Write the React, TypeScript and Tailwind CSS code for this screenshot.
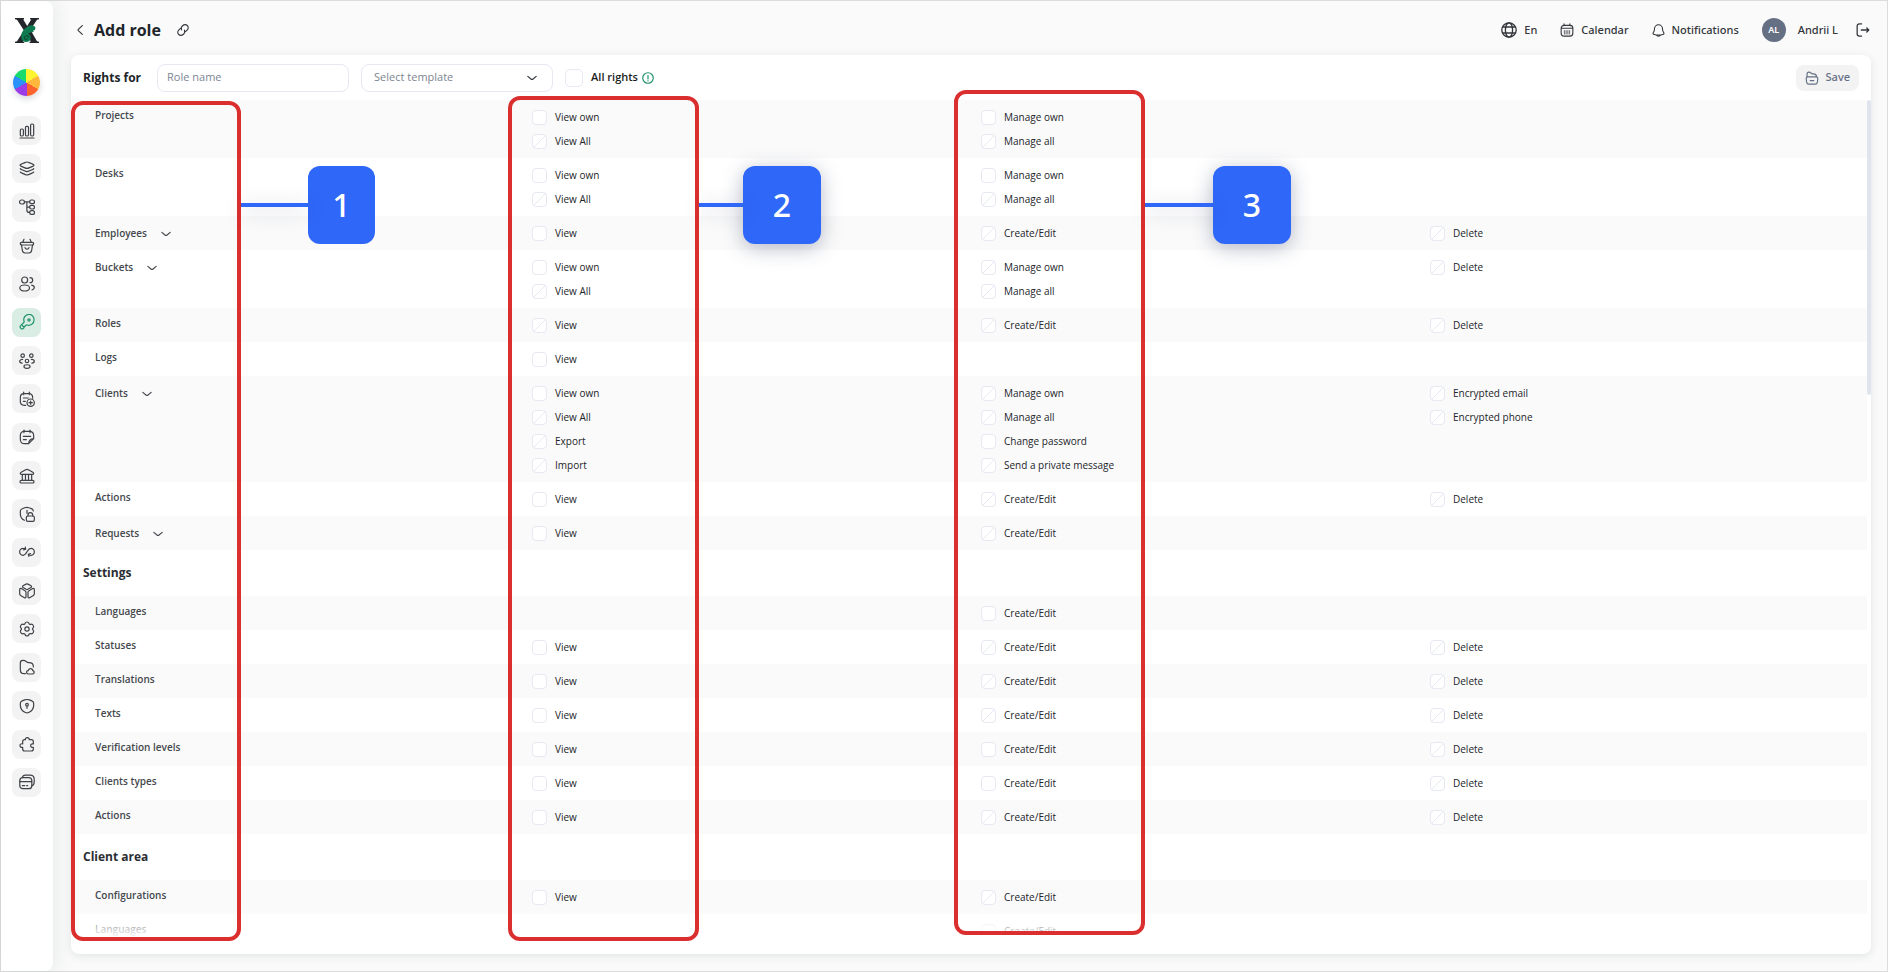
import type { ReactNode } from "react";

type Right = { label: string; locked?: boolean };

type Row = {
  name: string;
  section?: boolean;
  expandable?: boolean;
  view?: Right[];
  manage?: Right[];
  extra?: Right[];
};

const open = (label: string): Right => ({ label });
const locked = (label: string): Right => ({ label, locked: true });

const VIEW = [open("View")];
const VIEW_BOTH = [open("View own"), locked("View All")];
const EDIT = [locked("Create/Edit")];
const DELETE = [locked("Delete")];

const ROWS: Row[] = [
  { name: "Projects", view: VIEW_BOTH, manage: [open("Manage own"), locked("Manage all")] },
  { name: "Desks", view: VIEW_BOTH, manage: [open("Manage own"), locked("Manage all")] },
  { name: "Employees", expandable: true, view: VIEW, manage: EDIT, extra: DELETE },
  { name: "Buckets", expandable: true, view: VIEW_BOTH, manage: [locked("Manage own"), locked("Manage all")], extra: DELETE },
  { name: "Roles", view: [locked("View")], manage: EDIT, extra: DELETE },
  { name: "Logs", view: VIEW },
  {
    name: "Clients",
    expandable: true,
    view: [...VIEW_BOTH, locked("Export"), locked("Import")],
    manage: [locked("Manage own"), locked("Manage all"), open("Change password"), locked("Send a private message")],
    extra: [locked("Encrypted email"), locked("Encrypted phone")],
  },
  { name: "Actions", view: VIEW, manage: EDIT, extra: DELETE },
  { name: "Requests", expandable: true, view: VIEW, manage: EDIT },
  { name: "Settings", section: true },
  { name: "Languages", manage: [open("Create/Edit")] },
  { name: "Statuses", view: VIEW, manage: EDIT, extra: DELETE },
  { name: "Translations", view: VIEW, manage: EDIT, extra: DELETE },
  { name: "Texts", view: VIEW, manage: EDIT, extra: DELETE },
  { name: "Verification levels", view: VIEW, manage: [open("Create/Edit")], extra: DELETE },
  { name: "Clients types", view: VIEW, manage: [open("Create/Edit")], extra: DELETE },
  { name: "Actions", view: VIEW, manage: EDIT, extra: DELETE },
  { name: "Client area", section: true },
  { name: "Configurations", view: VIEW, manage: EDIT },
  { name: "Languages", manage: [open("Create/Edit")] },
];

function Svg({ children, className = "h-4 w-4", width = 1.8 }: { children: ReactNode; className?: string; width?: number }) {
  return (
    <svg
      viewBox="0 0 24 24"
      fill="none"
      stroke="currentColor"
      strokeWidth={width}
      strokeLinecap="round"
      strokeLinejoin="round"
      className={`shrink-0 ${className}`}
      aria-hidden
    >
      {children}
    </svg>
  );
}

const NAV: { label: string; icon: ReactNode }[] = [
  {
    label: "Statistics",
    icon: (
      <>
        <path d="M1.5 22.5h21" />
        <rect x="2" y="9" width="4.6" height="10.5" rx="1.8" />
        <rect x="9.7" y="5" width="4.6" height="14.5" rx="1.8" />
        <rect x="17.4" y="1.5" width="4.6" height="18" rx="1.8" />
      </>
    ),
  },
  {
    label: "Desks",
    icon: (
      <>
        <path d="M4.5 8.4C2.5 7.6 1.5 7.1 1.5 6.3s1-1.2 3-2.1L8 2.8C9.9 2 10.9 1.5 12 1.5s2.1.5 4 1.3l3.5 1.4c2 .9 3 1.3 3 2.1s-1 1.3-3 2.1L16 9.9c-1.9.8-2.9 1.2-4 1.2s-2.1-.4-4-1.2z" />
        <path d="M2 11.500c.3.800 1.100 1.100 2.500 1.700L8 14.700c1.900.8 2.900 1.200 4 1.200s2.100-.4 4-1.200l3.500-1.500c1.400-.6 2.200-.9 2.500-1.700" />
        <path d="M2 16.500c.3.800 1.100 1.100 2.500 1.700L8 19.700c1.900.8 2.900 1.300 4 1.300s2.100-.5 4-1.300l3.500-1.500c1.400-.6 2.200-.9 2.500-1.700" />
      </>
    ),
  },
  {
    label: "Structure",
    icon: (
      <>
        <rect x=".8" y="1.500" width="7.400" height="6" rx="3" />
        <rect x="16" y="1.500" width="7.200" height="5.500" rx="2.500" />
        <rect x="16" y="9.500" width="7.200" height="5.500" rx="2.500" />
        <rect x="16" y="17.500" width="7.200" height="5.500" rx="2.500" />
        <path d="M8.200 4.300H16M11.800 4.300v12.500c0 2.300 1 3.400 4.200 3.400M11.800 12.200H16" />
      </>
    ),
  },
  {
    label: "Buckets",
    icon: (
      <>
        <path d="M2 8.500C2 7.200 2.800 6.500 4 6.500h16c1.200 0 2 .7 2 2s-.8 2-2 2H4c-1.200 0-2-.7-2-2zM7.500 2 5.500 6.300M16.500 2l2 4.300" />
        <path d="m3.800 10.700 1.200 8c.5 2.600 1.500 3.800 4 3.800h6c2.500 0 3.500-1.200 4-3.800l1.200-8M9 14.500c.4 1.500 1.500 2.400 3 2.400s2.600-.9 3-2.400" />
      </>
    ),
  },
  {
    label: "Employees",
    icon: (
      <>
        <circle cx="8.500" cy="6" r="4.500" />
        <ellipse cx="8.500" cy="18" rx="7.300" ry="4.500" />
        <path d="M16.500 2.500c2.300 0 4 1.600 4 3.700s-1.700 3.800-4 3.800M19 13.800c2.300.5 4 1.800 4 3.600s-1.400 3-3.500 3.600" />
      </>
    ),
  },
  {
    label: "Roles",
    icon: (
      <>
        <path d="M22.500 9.200a7.700 7.700 0 0 1-10.300 7.300c-.7-.2-1.300-.1-1.800.4l-1 1.100c-.4.4-1.200.5-1.800.5.2.9.2 1.700-.5 2.500l-.7.7c-.9 1-2.300 1-3.200.1l-1-1c-.9-.9-.9-2.200 0-3.100l5-5c.5-.5.6-1.100.4-1.800A7.700 7.700 0 1 1 22.500 9.200z" />
        <path d="m4.800 17.200 2.300 2" />
        <circle cx="15" cy="9" r="1.700" />
      </>
    ),
  },
  {
    label: "Teams",
    icon: (
      <>
        <circle cx="5.500" cy="4" r="2.600" />
        <circle cx="18.500" cy="4" r="2.600" />
        <circle cx="12" cy="12" r="2.600" />
        <ellipse cx="12" cy="20.300" rx="4.600" ry="2.700" />
        <path d="M5.500 9.500c-2.600 0-4.500 1.300-4.500 3s1.500 2.500 3.700 2.700M18.500 9.500c2.600 0 4.500 1.300 4.500 3s-1.500 2.500-3.700 2.700" />
      </>
    ),
  },
  {
    label: "Add event",
    icon: (
      <>
        <path d="M10 21.500H8c-4.300 0-6-1.700-6-6V9.800c0-4.300 1.700-6 6-6h6.500c4.300 0 6 1.700 6 6v1M7 1.500v4M15.500 1.500v4M6.500 10.500H14M6.500 15.500h3" />
        <circle cx="17.500" cy="17.500" r="5.500" />
        <path d="M17.500 15v5M15 17.500h5" />
      </>
    ),
  },
  {
    label: "Notes",
    icon: (
      <path d="M14.500 22H8.500c-4.500 0-6.500-2-6.500-6.500V10c0-4.500 2-6.500 6.500-6.500h7C20 3.500 22 5.500 22 10v4.500zM14.500 22c.3-5.200 2-7.200 7.500-7.500M7.500 1.500v4M16.500 1.500v4M6.500 11h11M6.500 16H11" />
    ),
  },
  {
    label: "Banks",
    icon: (
      <path d="M2 8.300c0-1 .4-1.500 1.300-2l6-3.400c1.800-1 3.600-1 5.400 0l6 3.400c.9.500 1.300 1 1.300 2 0 .7-.5 1.200-1.200 1.200H3.200C2.500 9.500 2 9 2 8.300zM5 9.500v9M9.700 9.500v9M14.300 9.500v9M19 9.500v9M3.500 18.500h17c1 0 2 .8 2 2s-1 2-2 2h-17c-1 0-2-.8-2-2s1-2 2-2z" />
    ),
  },
  {
    label: "Privacy",
    icon: (
      <>
        <path d="M8 21.500C4.500 19.800 2 16.800 2 12V7.500c0-2 .8-2.500 3-3.300l3.500-1.500c2.300-.9 4.300-.9 6.500 0L18.500 4c2 .8 2.800 1.500 3 3.500M12 6.500v4.500" />
        <rect x="11" y="15" width="12" height="8" rx="2" />
        <path d="M13.500 15v-1.500a3.500 3.500 0 0 1 7 0V15" />
      </>
    ),
  },
  {
    label: "Sync",
    icon: (
      <path d="M10 7.800C8.800 6.900 7.600 6.500 6.200 6.500A5 5 0 0 0 1 11.800 5 5 0 0 0 6.200 17c5.800 0 5.800-10.500 11.600-10.500A5 5 0 0 1 23 11.800 5 5 0 0 1 17.800 17c-1.500 0-2.700-.5-3.800-1.500M6.800 8.800 10 7.800 9.400 4.800M17.200 14.300 14 15.500l.8 3" />
    ),
  },
  {
    label: "Products",
    icon: (
      <>
        <path d="M10.500 1.700 6 4.200C5 4.800 5 6.100 6 6.700l4.800 2.800c.8.4 1.600.4 2.400 0L18 6.700c1-.6 1-1.900 0-2.500l-4.500-2.500c-1-.6-2-.6-3 0z" />
        <path d="m3.500 8.400 5.500 3.100c1 .6 1.500 1.200 1.500 2.400v6.800c0 1.500-1 2-2.300 1.300L3 19c-1.500-.8-2-1.600-2-3v-5.800c0-1.800 1-2.600 2.500-1.800z" />
        <path d="M20.500 8.400 15 11.500c-1 .6-1.500 1.200-1.500 2.400v6.800c0 1.500 1 2 2.300 1.300l5.200-3c1.500-.8 2-1.600 2-3v-5.800c0-1.800-1-2.600-2.500-1.800z" />
      </>
    ),
  },
  {
    label: "Settings",
    icon: (
      <>
        <circle cx="12" cy="12" r="3.200" />
        <path d="M9.200 3.300C9.600 2 10 1.500 12 1.500s2.400.5 2.800 1.800c.3 1.500 1.500 2.200 3 1.700 1.800-.6 2.500-.2 3.600 1.700s1.100 2.600-.3 3.700c-1.200 1-1.200 2.200 0 3.200 1.400 1.100 1.400 1.800.3 3.700s-1.800 2.300-3.600 1.700c-1.500-.5-2.700.2-3 1.700-.4 1.300-.8 1.800-2.800 1.800s-2.400-.5-2.800-1.800c-.3-1.500-1.500-2.200-3-1.700-1.800.6-2.500.2-3.600-1.700s-1.100-2.600.3-3.700c1.200-1 1.200-2.200 0-3.200C1.500 9.300 1.500 8.600 2.600 6.700S4.400 4.400 6.200 5c1.500.5 2.700-.2 3-1.700z" />
      </>
    ),
  },
  {
    label: "Files",
    icon: (
      <>
        <path d="M9.500 22H8c-4.500 0-6-1.500-6-6V6.500C2 3 3.200 2 6 2c3.200 0 3.700.6 5 2 1 1.200 2 1.500 4 1.500 4.500 0 6.500 1 6.500 5.500v1" />
        <path d="M14 22.500c-1.700 0-2.700-1-2.700-2.500s1-2.600 2.500-2.600c.3-2 1.700-3.100 3.400-3.100 2 0 3.400 1.300 3.600 3.200 1.200.3 2 1.200 2 2.500 0 1.500-1.100 2.500-2.700 2.500z" />
      </>
    ),
  },
  {
    label: "Security",
    icon: (
      <>
        <path d="M2 11V8c0-2.500.5-2.900 2.800-3.700l3.700-1.500C11 2 13 2 15.500 2.800l3.700 1.500C21.500 5.100 22 5.500 22 8v3c0 6.500-4.500 9.500-7.500 10.800-1.800.9-3.200.9-5 0C6.500 20.500 2 17.500 2 11z" />
        <circle cx="12" cy="10" r="2" />
        <path d="M12 12v3.500" />
      </>
    ),
  },
  {
    label: "Integrations",
    icon: (
      <path d="M9.500 5.500a3 3 0 1 1 6 0h3c2 0 3 1 3 3V12c-3-.5-4 1-4 2.500s1 3 4 2.500v2.500c0 2-1 3-3 3H8.500c-2 0-3-1-3-3V17c-3 .5-4-1-4-2.700s1-3 4-2.600V8.500c0-2 1-3 3-3z" />
    ),
  },
  {
    label: "Cards",
    icon: (
      <>
        <path d="M5 5.500C5.500 3 6.500 1.800 9.500 1.800h7c4.500 0 6.300 1.500 6.300 6V12c0 3.500-1 5-3.500 5.700" />
        <rect x="1.200" y="5.500" width="18" height="16.500" rx="4.500" />
        <path d="M1.200 11.500h18M5 17.500h3.500M11.500 17.500h1.500" />
      </>
    ),
  },
];

function Logo() {
  return (
    <svg viewBox="0 0 24 25" className="h-[25px] w-6" aria-hidden>
      <path d="M0 0h9v1.200L8.200 1.500 12.200 8l4-6.500-1.200-.3V0h9v1.200l-2 .6-6.600 10L22 23.300l2 .5V25h-9.500v-1.200l1.300-.3L12 17l-4.200 6.500 1.400.3V25H0v-1.200l2-.5 7-10.800L2 1.700 0 1.200z" fill="#23272b" />
      <path d="M20.300 9.200c-2.100-2.300-5.100-2.600-7.300-.8-3.200 1.500-6.300 5-6.700 8.800-.4 4 1.800 6.800 4.900 6.800 2.700 0 4.700-1.900 4.700-4.300 0-2.200-1.400-3.500-3.200-3.700l3.400-1.700c1.200.2 2.200-.2 2.700-.9l-.8-.7 2.200-1c-.7-.7.7-1.200.1-2.500z" fill="#0f7a50" />
      <path d="M14.200 19.500c0-2.200-4.400-2.400-4.800.3-.2 2.200 3.200 2.400 3.100.3" fill="none" stroke="#0a3f2c" strokeWidth="1" />
    </svg>
  );
}

function ColorWheel() {
  return (
    <span className="h-[27px] w-[27px] rounded-full shadow-[0_3px_6px_rgba(60,70,90,0.2)] bg-[conic-gradient(#fdf32f_0_60deg,#ffb73e_60deg_120deg,#fd632c_120deg_180deg,#9a3ce8_180deg_240deg,#2a91fb_240deg_300deg,#17db6b_300deg)]" />
  );
}

function Sidebar() {
  return (
    <aside className="relative z-10 flex w-[52px] shrink-0 flex-col items-center rounded-r-lg bg-white pr-px pt-[17px] shadow-[2px_0_18px_rgba(50,65,75,0.1)]">
      <Logo />
      <button type="button" aria-label="Theme" className="mt-[26px] flex">
        <ColorWheel />
      </button>
      <nav className="mt-5 flex h-[681px] flex-col justify-between">
        {NAV.map((item) => (
          <a
            key={item.label}
            href="#"
            aria-label={item.label}
            aria-current={item.label === "Roles" ? "page" : undefined}
            className={`grid h-[29px] w-[29px] place-items-center rounded-lg ${
              item.label === "Roles" ? "bg-[#d9ede5] text-[#1f9268]" : "bg-[#f3f3f3] text-[#3f4246]"
            }`}
          >
            <Svg>{item.icon}</Svg>
          </a>
        ))}
      </nav>
    </aside>
  );
}

function Chevron() {
  return (
    <Svg className="h-[10px] w-[10px]" width={2.8}>
      <path d="m2 8 7.500 6.500c1.600 1.400 3.400 1.400 5 0L22 8" />
    </Svg>
  );
}

function Header() {
  return (
    <header className="flex h-[54px] items-center justify-between pl-1 pr-px pt-[4px] font-['Noto_Sans','Open_Sans',sans-serif] text-[11px] font-medium text-[#33363b]">
      <div className="flex items-center">
        <a href="#" aria-label="Back">
          <Svg className="h-[10px] w-[10px]" width={2.8}>
            <path d="m17.500 1.500-9.500 9c-.9 1-.9 2 0 3l9.500 9" />
          </Svg>
        </a>
        <h1 className="ml-[9px] font-['Open_Sans',sans-serif] text-base font-bold text-[#212529]">Add role</h1>
        <button type="button" aria-label="Copy link" className="ml-4">
          <Svg className="h-3 w-3" width={2.2}>
            <path d="M9.200 11.800c-1.800-2.900-.8-5.300.6-6.800l2-2a6.200 6.200 0 0 1 8.800 0c2.500 2.500 2.500 6.300 0 8.800l-2 2c-1 1-2 1.500-3.500 1.700" />
            <path d="M14.800 12.200c1.800 2.900.8 5.300-.6 6.800l-2 2a6.200 6.200 0 0 1-8.800 0c-2.500-2.500-2.500-6.300 0-8.800l2-2c1-1 2-1.500 3.500-1.700" />
          </Svg>
        </button>
      </div>
      <div className="flex items-center">
        <button type="button" className="flex items-center gap-[7px]">
          <Svg width={2}>
            <circle cx="12" cy="12" r="10.800" />
            <ellipse cx="12" cy="12" rx="5.400" ry="10.800" />
            <path d="M2.500 7.500h19M2.500 16.500h19" />
          </Svg>
          En
        </button>
        <a href="#" className="ml-[23px] flex items-center gap-[7px]">
          <Svg className="h-[14px] w-[14px]" width={1.9}>
            <rect x="2" y="4" width="20" height="18.500" rx="5" />
            <path d="M7 1.500V4M17 1.500V4M2.500 9h19" />
            <path d="M7.500 13v6M10.500 13v6M13.500 13v6M16.500 13v6" strokeWidth="1.300" />
          </Svg>
          Calendar
        </a>
        <a href="#" className="ml-[23px] flex items-center gap-[7px]">
          <Svg className="h-[13px] w-[13px]" width={2}>
            <path d="M19.500 9.500C19.500 5 16.200 1.500 12 1.500S4.500 5 4.500 9.500c0 4-1 4.700-2.300 6.700-1 1.600.3 2.800 1.800 3.200 5 1.300 11 1.300 16 0 1.500-.4 2.800-1.600 1.800-3.200-1.300-2-2.300-2.700-2.300-6.700zM8 20.500c.8 1.500 2.200 2.200 4 2.200s3.200-.7 4-2.200" />
          </Svg>
          Notifications
        </a>
        <span className="ml-[23px] grid h-6 w-6 place-items-center rounded-full bg-[#667085] text-[9px] font-semibold text-white">AL</span>
        <span className="ml-3">Andrii L</span>
        <button type="button" aria-label="Log out" className="ml-[18px]">
          <Svg className="h-[14px] w-[14px]" width={2.2}>
            <path d="M9.500 1.500H6c-2.800 0-4 1.200-4 4v13c0 2.800 1.200 4 4 4h3.500M9 12h13M18.500 8.500 22 12l-3.500 3.500" />
          </Svg>
        </button>
      </div>
    </header>
  );
}

function CheckBox({ right }: { right: Right }) {
  return (
    <label className="flex h-[15px] items-center gap-2">
      <span className="relative flex">
        <input
          type="checkbox"
          disabled={right.locked}
          className="h-[15px] w-[15px] appearance-none rounded-[4px] border border-[#e6e8f2] bg-white"
        />
        {right.locked && (
          <svg viewBox="0 0 15 15" className="pointer-events-none absolute inset-0" aria-hidden>
            <path d="M2 13 13 2" stroke="#e6e8f2" strokeWidth="1" />
          </svg>
        )}
      </span>
      {right.label}
    </label>
  );
}

function Rights({ items }: { items?: Right[] }) {
  return (
    <td className="px-3 pb-[9px] pt-[10px] align-top">
      {items && (
        <div className="flex flex-col gap-[9px]">
          {items.map((r) => (
            <CheckBox key={r.label} right={r} />
          ))}
        </div>
      )}
    </td>
  );
}

function RightsTable() {
  return (
    <table className="w-full table-fixed border-collapse text-[10px] leading-[15px] text-[#232529]">
      <tbody>
        {ROWS.map((row, i) =>
          row.section ? (
            <tr key={i} className="h-[46px] odd:bg-[#fafafa]">
              <th colSpan={4} scope="rowgroup" className="px-3 text-left text-xs font-bold text-[#2b2e33]">
                {row.name}
              </th>
            </tr>
          ) : (
            <tr key={i} className="odd:bg-[#fafafa]">
              <th
                scope="row"
                className={`pl-6 pr-3 text-left align-top font-semibold text-[#45484d] ${row.expandable ? "pt-[10px]" : "pt-2"}`}
              >
                {row.expandable ? (
                  <button type="button" className="flex items-center gap-[14px]">
                    {row.name}
                    <Chevron />
                  </button>
                ) : (
                  row.name
                )}
              </th>
              <Rights items={row.view} />
              <Rights items={row.manage} />
              <Rights items={row.extra} />
            </tr>
          ),
        )}
      </tbody>
    </table>
  );
}

function Toolbar() {
  return (
    <div className="flex h-[45px] shrink-0 items-center px-3 text-[11px]">
      <label htmlFor="role-name" className="text-xs font-bold text-[#212529]">
        Rights for
      </label>
      <input
        id="role-name"
        placeholder="Role name"
        className="ml-4 h-7 w-48 rounded-lg border border-[#e6e8f2] px-[9px] pb-0.5 placeholder:text-[#7d8592]"
      />
      <div className="relative ml-3 w-48">
        <select
          aria-label="Select template"
          className="h-7 w-full appearance-none rounded-lg border border-[#e6e8f2] bg-white px-3 text-[#7d8592]"
        >
          <option>Select template</option>
        </select>
        <span className="pointer-events-none absolute inset-y-0 right-4 flex items-center text-[#33363b]">
          <Chevron />
        </span>
      </div>
      <label className="ml-3 flex items-center gap-2 font-semibold text-[#1b1d21]">
        <input type="checkbox" className="h-[18px] w-[18px] appearance-none rounded-[5px] border border-[#e6e8f2] bg-white" />
        All rights
      </label>
      <button type="button" aria-label="About rights" className="ml-1 text-[#1f9268]">
        <Svg className="h-3 w-3" width={2.4}>
          <circle cx="12" cy="12" r="10.500" />
          <path d="M12 7v7M12 17v.5" />
        </Svg>
      </button>
      <button
        type="button"
        className="ml-auto flex h-[26px] items-center gap-[7px] rounded-lg bg-[#f3f3f3] px-[9px] font-['Noto_Sans','Open_Sans',sans-serif] font-medium text-[#667085]"
      >
        <Svg className="h-[14px] w-[14px]" width={2}>
          <path d="M3.500 10V5.500c0-2.500 1-3.500 3-3.500s3 .5 4 1.800 2 1.200 4 1.200c3.500 0 5 1 5.500 5M5 10h14c2 0 3 1 3 3l-.8 6c-.3 2.200-1.200 3.500-3.700 3.500h-11c-2.500 0-3.400-1.300-3.700-3.500L2 13c0-2 1-3 3-3zM9 16.500h6" />
        </Svg>
        Save
      </button>
    </div>
  );
}

// Numbered markers of the guide, drawn over the table
function Markers() {
  const frame = "absolute rounded-xl border-4 border-[#db2f2f]";
  const line = "absolute top-[148px] h-1 bg-[#2f67f8]";
  const badge =
    "absolute top-[111px] grid h-[78px] place-items-center rounded-xl bg-[#2f67f8] font-['Noto_Sans','Open_Sans',sans-serif] text-[32px] font-medium text-white";
  const shadow = "shadow-[0_4px_20px_rgba(50,60,100,0.35)]";

  return (
    <div className="pointer-events-none absolute inset-0">
      <div className={`${frame} bottom-[13px] left-0 top-[46px] w-[170px]`} />
      <div className={`${frame} bottom-[13px] left-[437px] top-[41px] w-[191px]`} />
      <div className={`${frame} bottom-[19px] left-[883px] top-[35px] w-[191px]`} />
      <div className={`${badge} left-[237px] w-[67px]`}>1</div>
      <div className={`${badge} ${shadow} left-[672px] w-[78px]`}>2</div>
      <div className={`${badge} ${shadow} left-[1142px] w-[78px]`}>3</div>
      <div className={`${line} left-[170px] w-[68px] shadow-[0_4px_20px_rgba(50,60,100,0.3)]`} />
      <div className={`${line} left-[628px] w-[46px] shadow-[0_4px_20px_rgba(50,60,100,0.3)]`} />
      <div className={`${line} left-[1074px] w-[70px] shadow-[0_4px_20px_rgba(50,60,100,0.3)]`} />
    </div>
  );
}

export default function App() {
  return (
    <div className="flex h-screen border border-[#dcdcdc] bg-[#fafafa] font-['Open_Sans','Noto_Sans',sans-serif]">
      <Sidebar />
      <div className="flex min-w-0 flex-1 flex-col pb-[17px] pl-[18px] pr-4">
        <Header />
        <main className="relative flex min-h-0 flex-1 flex-col rounded-lg bg-white pb-3 shadow-[0_2px_8px_rgba(50,65,75,0.12)]">
          <Toolbar />
          <div className="relative min-h-0 flex-1 overflow-hidden pr-1">
            <RightsTable />
            <div className="absolute right-0 top-0 h-[35%] w-1 rounded bg-[#dfe4ed]" />
            <div className="absolute inset-x-0 bottom-0 h-9 bg-linear-to-b from-transparent to-white to-90%" />
          </div>
          <Markers />
        </main>
      </div>
    </div>
  );
}
